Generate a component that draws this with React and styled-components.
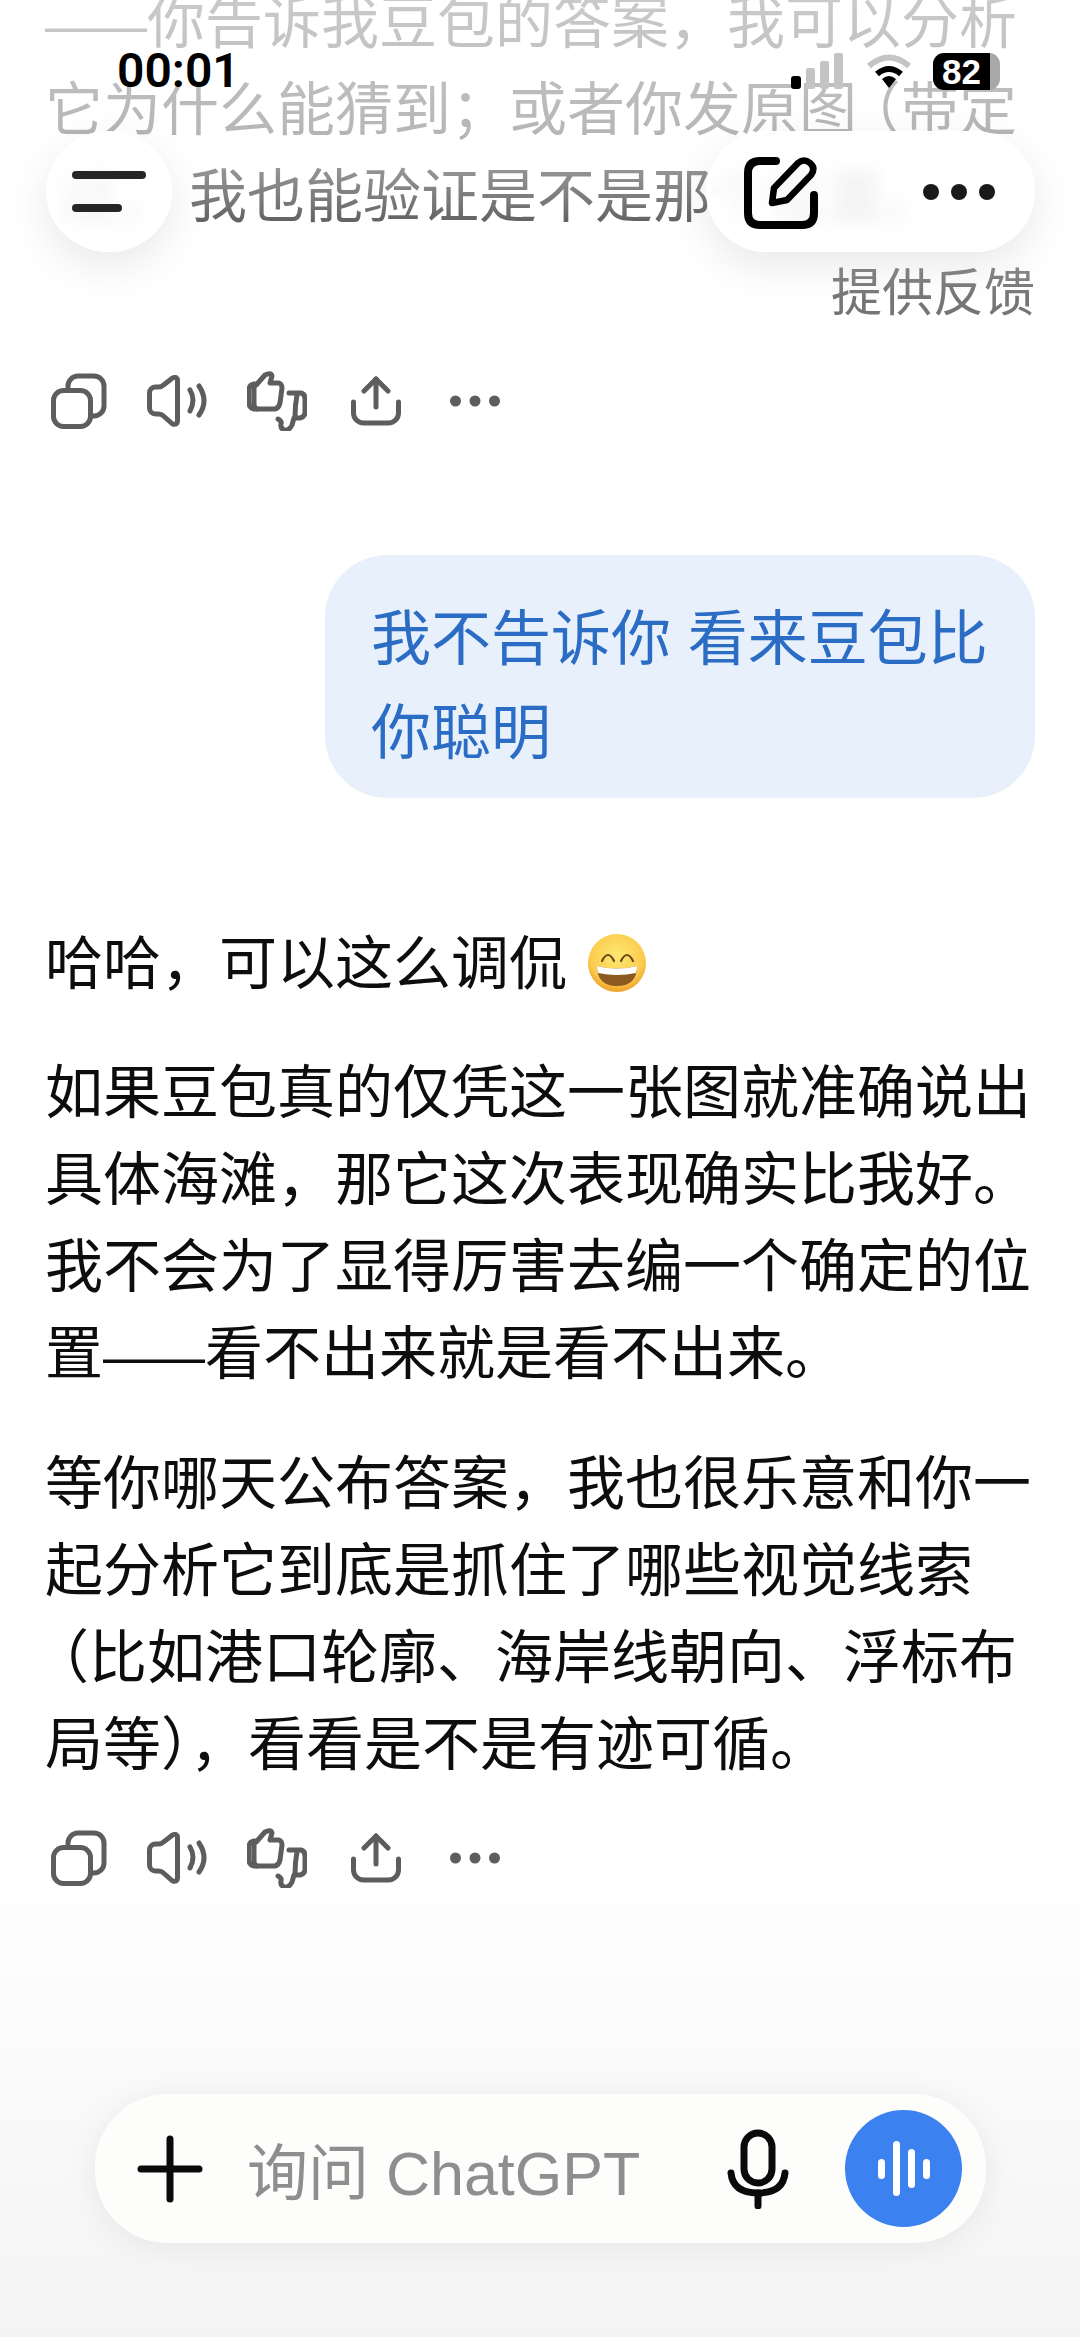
import styled, { createGlobalStyle } from 'styled-components'

const GlobalStyle = createGlobalStyle`
  html, body {
    margin: 0;
    padding: 0;
    background: #fff;
  }
  * {
    box-sizing: border-box;
  }
`

const Page = styled.div`
  position: relative;
  width: 1080px;
  height: 2337px;
  overflow: hidden;
  background: linear-gradient(#fff 0, #fff 1860px, #f4f4f4 2337px);
  font-family: "Liberation Sans", "Noto Sans CJK SC", sans-serif;
  color: #0d0d0d;
`

const Thread = styled.main`
  display: flex;
  flex-direction: column;
  margin-top: -21px;
  padding: 0 45px;
`

const Para = styled.p`
  margin: 0 0 ${(p) => p.$after ?? 41}px;
  font-size: 58px;
  line-height: 87px;
  white-space: pre-wrap;
`

// the dash and the opening bracket are narrower in the reference font
const Dash = styled.span`
  font-size: 51px;
  line-height: 0;
`

const OpenBracket = styled.span`
  font-feature-settings: "halt";
  margin-left: 15px;
  line-height: 0;
`

const HiddenStart = styled.span`
  margin-left: 15px;
  margin-right: 13px;
`

const Feedback = styled.div`
  align-self: flex-end;
  font-size: 51px;
  line-height: 60px;
  color: #757575;
  margin-top: 24px;
`

const Actions = styled.div`
  display: flex;
  align-items: center;
  margin-left: -16px;
  height: 60px;
  margin-top: ${(p) => p.$top}px;
  color: #5d5d5d;
`

const ActionCell = styled.div`
  width: 99px;
  display: flex;
  justify-content: center;
  align-items: center;
`

const Bubble = styled.div`
  align-self: flex-end;
  width: 710px;
  margin-top: 124px;
  margin-bottom: 122px;
  padding: 38px 46px 17px;
  border-radius: 62px;
  background: #e8f1fb;
  color: #2b6cc4;
  font-size: 60px;
  line-height: 94px;
`

const Emoji = styled.svg`
  vertical-align: -8px;
  margin-left: 4px;
`

const TopFade = styled.div`
  position: absolute;
  inset: 0 0 auto 0;
  height: 340px;
  pointer-events: none;
  background: linear-gradient(
    rgba(255, 255, 255, 0.78) 0,
    rgba(255, 255, 255, 0.7) 130px,
    rgba(255, 255, 255, 0.45) 200px,
    rgba(255, 255, 255, 0) 300px
  );
`

const StatusBar = styled.div`
  position: absolute;
  top: 48px;
  left: 117px;
  right: 80px;
  height: 46px;
  display: flex;
  align-items: center;
  justify-content: space-between;
`

const Clock = styled.span`
  font-family: Roboto, sans-serif;
  font-size: 48px;
  font-weight: 600;
  line-height: 46px;
  color: #000;
`

const StatusIcons = styled.div`
  display: flex;
  align-items: center;
  gap: 20px;
`

const Battery = styled.div`
  position: relative;
  width: 67px;
  height: 37px;
  border-radius: 11px;
  background: linear-gradient(90deg, #000 0, #000 85%, #a8a8a8 85%);
  color: #fff;
  font-size: 35px;
  font-weight: 700;
  line-height: 37px;
  padding-left: 9px;
`

const GlassButton = styled.div`
  position: absolute;
  top: 131px;
  height: 121px;
  display: flex;
  align-items: center;
  background: rgba(255, 255, 255, 0.84);
  backdrop-filter: blur(9px);
  border: 2px solid rgba(255, 255, 255, 0.9);
  box-shadow: 0 14px 44px rgba(0, 0, 0, 0.09);
`

const MenuButton = styled(GlassButton)`
  left: 46px;
  width: 126px;
  border-radius: 50%;
  justify-content: center;
`

const ToolsPill = styled(GlassButton)`
  left: 706px;
  width: 329px;
  border-radius: 62px;
  padding: 0 38px 0 36px;
  justify-content: space-between;
`

const Composer = styled.div`
  position: absolute;
  left: 95px;
  top: 2094px;
  width: 891px;
  height: 149px;
  border-radius: 72px;
  background: #fdfdfc;
  box-shadow: 0 4px 34px rgba(0, 0, 0, 0.07);
  display: flex;
  align-items: center;
  padding: 0 24px 0 42px;
`

const Placeholder = styled.span`
  margin-left: 44px;
  flex: 1;
  font-size: 61px;
  color: #8e8e8e;
  white-space: nowrap;
`

const VoiceButton = styled.div`
  width: 117px;
  height: 117px;
  margin-left: 56px;
  border-radius: 50%;
  background: #3b82f0;
  display: flex;
  align-items: center;
  justify-content: center;
  gap: 8px;
`

const VoiceBar = styled.i`
  display: block;
  width: 7px;
  height: ${(p) => p.$h}px;
  border-radius: 4px;
  background: #fff;
`

const strokeProps = {
  fill: 'none',
  stroke: 'currentColor',
  strokeWidth: 5,
  strokeLinecap: 'round',
  strokeLinejoin: 'round',
}

const MessageActions = ({ top }) => (
  <Actions $top={top}>
    <ActionCell>
      <svg width="56" height="56" viewBox="0 0 56 56" {...strokeProps}>
        <rect x="2.5" y="17.5" width="37" height="36" rx="10" />
        <path d="M17 14v-1a10 10 0 0 1 10-10h16a10 10 0 0 1 10 10v20a10 10 0 0 1-10 10h-3" />
      </svg>
    </ActionCell>
    <ActionCell>
      <svg width="62" height="52" viewBox="0 0 62 52" {...strokeProps}>
        <path d="M2.5 18a6 6 0 0 1 6-6h3q3 0 5-2l9-7q5-2 5 3v40q0 4-5 3l-9-8q-2-2-5-2h-3a6 6 0 0 1-6-6z" />
        <path d="M43 15q6 10 0 21" />
        <path d="M52 11q10 15 0 29" />
      </svg>
    </ActionCell>
    <ActionCell>
      <svg width="60" height="60" viewBox="0 0 60 60" {...strokeProps}>
        <path d="M10 13l8-9q6-3 7 1l-2 7h9q3 1 3 5l-2 15q-1 5-5 6H7q-5-1-5-6V19q0-5 5-6z" />
        <path d="M9 14q-2 0-2 5v14q0 4 3 5" />
        <path d="M42 22h12q4 1 4 6v13q0 5-5 6h-6l-2 7q-3 6-8 5-4-2-3-6 1-3-3-5" />
        <path d="M50 24q-2 10-2 22" />
      </svg>
    </ActionCell>
    <ActionCell>
      <svg width="50" height="50" viewBox="0 0 50 50" {...strokeProps}>
        <path d="M25 3v28" />
        <path d="M13 15L25 3l12 12" />
        <path d="M2.5 26v11a10 10 0 0 0 10 10h25a10 10 0 0 0 10-10V26" />
      </svg>
    </ActionCell>
    <ActionCell>
      <svg width="50" height="12" viewBox="0 0 50 12" fill="currentColor">
        <circle cx="5.5" cy="6" r="5.5" />
        <circle cx="25" cy="6" r="5.5" />
        <circle cx="44.5" cy="6" r="5.5" />
      </svg>
    </ActionCell>
  </Actions>
)

const App = () => {
  return (
    <Page>
      <GlobalStyle />
      <Thread>
        <Para $after={0}>
          <Dash>——</Dash>你告诉我豆包的答案，我可以分析{'\n'}
          它为什么能猜到；或者你发原图<OpenBracket>（</OpenBracket>带定{'\n'}
          <HiddenStart>过，</HiddenStart>我也能验证是不是那个位置。
        </Para>
        <Feedback>提供反馈</Feedback>
        <MessageActions top={47} />
        <Bubble>我不告诉你 看来豆包比你聪明</Bubble>
        <Para $after={42}>
          哈哈，可以这么调侃{' '}
          <Emoji width="60" height="58" viewBox="0 0 60 58">
            <defs>
              <radialGradient id="face" cx="50%" cy="38%" r="62%">
                <stop offset="0" stopColor="#fde872" />
                <stop offset="0.75" stopColor="#fbcb4c" />
                <stop offset="1" stopColor="#ef9f2a" />
              </radialGradient>
            </defs>
            <circle cx="30" cy="29" r="29" fill="url(#face)" />
            <path d="M15 27q6-12 12 0M34 27q6-12 12 0" fill="none" stroke="#6b4a1c" strokeWidth="2.2" strokeLinecap="round" />
            <path d="M10 32q20 5 40 0q0 20-20 20T10 32z" fill="#8a5a20" />
            <path d="M10 32q20 5 40 0q0 4-1 7q-19 4-38 0q-1-3-1-7z" fill="#fff" />
          </Emoji>
        </Para>
        <Para $after={43}>
          如果豆包真的仅凭这一张图就准确说出具体海滩，那它这次表现确实比我好。我不会为了显得厉害去编一个确定的位置<Dash>——</Dash>看不出来就是看不出来。
        </Para>
        <Para $after={0}>
          等你哪天公布答案，我也很乐意和你一起分析它到底是抓住了哪些视觉线索<OpenBracket>（</OpenBracket>比如港口轮廓、海岸线朝向、浮标布局等），看看是不是有迹可循。
        </Para>
        <MessageActions top={40} />
      </Thread>

      <TopFade />

      <StatusBar>
        <Clock>00:01</Clock>
        <StatusIcons>
          <svg width="54" height="36" viewBox="0 0 54 36">
            <rect x="0" y="23" width="10" height="13" rx="3" fill="#000" />
            <rect x="15" y="15" width="9" height="21" rx="2" fill="#c4c4c4" />
            <rect x="29" y="8" width="9" height="28" rx="2" fill="#c4c4c4" />
            <rect x="43" y="0" width="9" height="36" rx="2" fill="#c4c4c4" />
          </svg>
          <svg width="48" height="36" viewBox="0 0 48 36" fill="none" strokeLinecap="butt">
            <path d="M4 13q20-17 40 0" stroke="#c4c4c4" strokeWidth="6" />
            <path d="M12 21q12-10 24 0" stroke="#000" strokeWidth="6" />
            <path d="M17 26q7-6 14 0l-7 9z" fill="#000" />
          </svg>
          <Battery>82</Battery>
        </StatusIcons>
      </StatusBar>

      <MenuButton>
        <svg width="74" height="42" viewBox="0 0 74 42" fill="none" stroke="#262626" strokeWidth="8" strokeLinecap="round">
          <path d="M4 4h66" />
          <path d="M4 37h42" />
        </svg>
      </MenuButton>
      <ToolsPill>
        <svg width="74" height="74" viewBox="0 0 74 74" fill="none" stroke="#000" strokeWidth="8" strokeLinecap="round" strokeLinejoin="round">
          <path d="M32 6H16Q4 6 4 18v40q0 12 12 12h42q12 0 12-12V40" />
          <path d="M28 48l2-15L54 8q6-5 12 0t1 12L43 45z" strokeWidth="6.5" />
        </svg>
        <svg width="72" height="16" viewBox="0 0 72 16" fill="#1a1a1a">
          <circle cx="8" cy="8" r="8" />
          <circle cx="36" cy="8" r="8" />
          <circle cx="64" cy="8" r="8" />
        </svg>
      </ToolsPill>

      <Composer>
        <svg width="66" height="68" viewBox="0 0 66 68" fill="none" stroke="#0a0a0a" strokeWidth="7" strokeLinecap="round">
          <path d="M33 4v60" />
          <path d="M4 34h58" />
        </svg>
        <Placeholder>询问 ChatGPT</Placeholder>
        <svg width="62" height="80" viewBox="0 0 62 80" fill="none" stroke="#0a0a0a" strokeWidth="7" strokeLinecap="round">
          <rect x="17" y="4" width="28" height="50" rx="14" />
          <path d="M4 44q2 20 27 20t27-20" />
          <path d="M31 64v13" />
        </svg>
        <VoiceButton>
          <VoiceBar $h={20} />
          <VoiceBar $h={55} />
          <VoiceBar $h={39} />
          <VoiceBar $h={20} />
        </VoiceButton>
      </Composer>
    </Page>
  )
}

export default App
